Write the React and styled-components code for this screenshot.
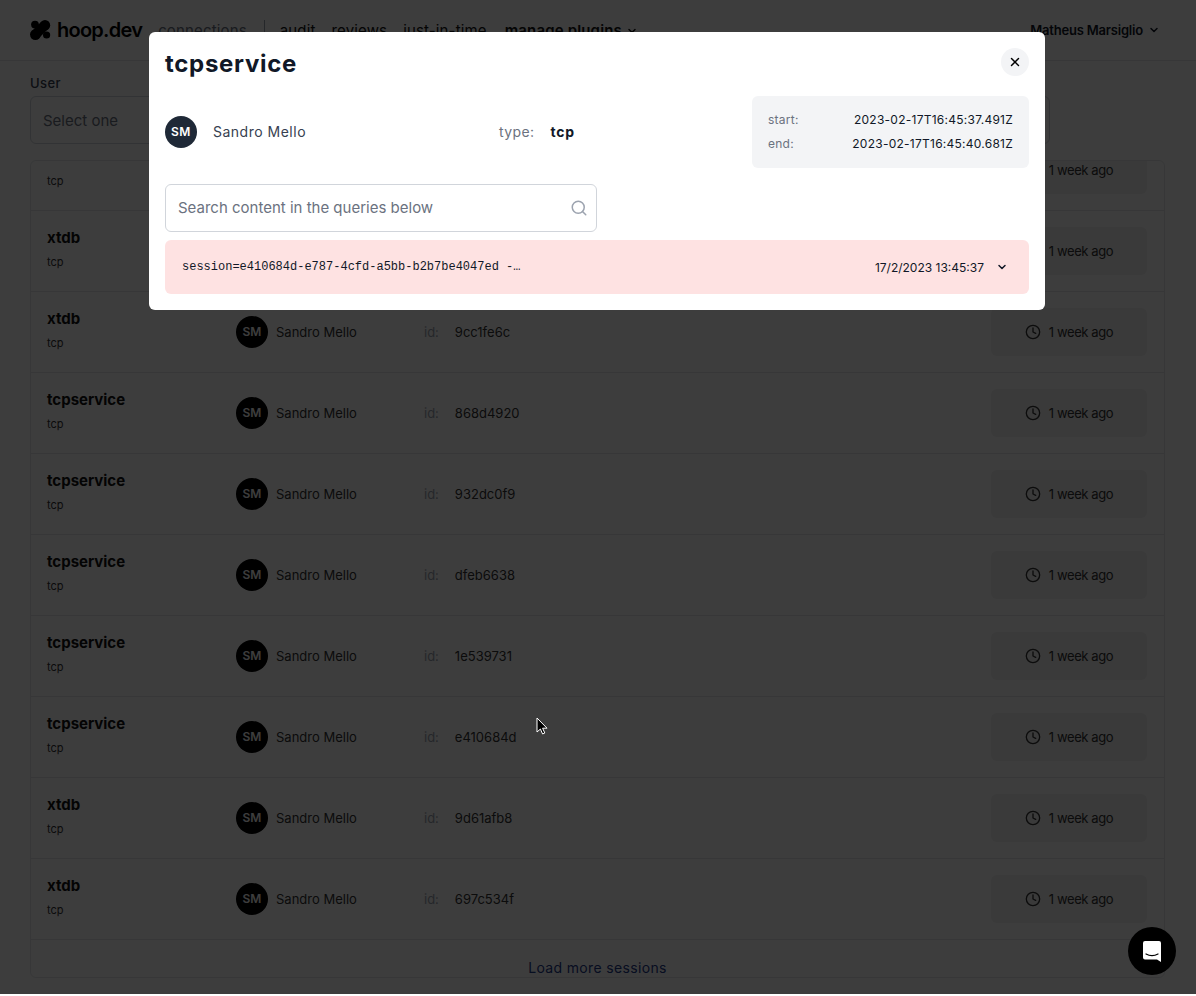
import React from 'react'
import styled, { createGlobalStyle } from 'styled-components'
import { ChevronDown, Clock, Search, X } from 'lucide-react'

const GlobalStyle = createGlobalStyle`
  html, body {
    margin: 0;
    height: 100%;
    overflow: hidden;
    background: #fff;
    font-family: Inter, "Open Sans", sans-serif;
    color: #111827;
  }
  * { box-sizing: border-box; }
`

const Page = styled.div`
  height: 994px;
  display: flex;
  flex-direction: column;
  background: #fff;
`

const Header = styled.header`
  height: 61px;
  flex: none;
  display: flex;
  align-items: center;
  padding: 0 36px 0 30px;
  border-bottom: 1px solid #e5e7eb;
`

const Logo = styled.div`
  display: flex;
  align-items: center;
  gap: 6px;
  font-size: 20px;
  font-weight: 600;
  letter-spacing: -0.75px;
  color: #000;
  margin-right: 16px;
`

const Nav = styled.nav`
  display: flex;
  align-items: center;
  gap: 16px;
  font-size: 15px;
  letter-spacing: 0.15px;
  flex: 1;
  padding-top: 1px;
`

const NavItem = styled.span`
  color: ${({ muted }) => (muted ? '#6b7280' : '#111')};
  font-weight: ${({ strong }) => (strong ? 600 : 400)};
  margin-left: ${({ strong }) => (strong ? '2px' : '0')};
  display: flex;
  align-items: center;
  gap: 4px;
`

const NavDivider = styled.span`
  width: 1px;
  height: 22px;
  margin: 0 -1px 0 1px;
  background: #9ca3af;
`

const UserMenu = styled.div`
  display: flex;
  align-items: center;
  gap: 5px;
  font-size: 13px;
  font-weight: 600;
  letter-spacing: -0.2px;
`

const Filters = styled.div`
  flex: none;
  padding: 15px 30px 0;
  height: 99px;
`

const FilterLabel = styled.div`
  font-size: 13px;
  font-weight: 500;
  letter-spacing: 0.4px;
  color: #374151;
  margin-bottom: 5px;
  line-height: 15px;
`

const SelectBox = styled.div`
  width: 1020px;
  height: 48px;
  border: 1px solid #d1d5db;
  border-radius: 6px;
  display: flex;
  align-items: center;
  padding: 0 12px;
  font-size: 15px;
  color: #6b7280;
`

const ListBox = styled.div`
  flex: none;
  margin: 0 31px 0 30px;
  height: 818px;
  border: 1px solid #e5e7eb;
  border-radius: 6px;
  overflow: hidden;
`

const ScrollList = styled.div`
  margin-top: -31px;
`

const Row = styled.div`
  height: 81px;
  display: flex;
  align-items: center;
  padding: 0 16px 1px;
  border-bottom: 1px solid #e5e7eb;
`

const ConnectionCell = styled.div`
  width: 189px;
  flex: none;
  display: flex;
  flex-direction: column;
  gap: 9px;
  padding-bottom: 4px;
`

const ConnectionName = styled.div`
  font-size: 15px;
  font-weight: 700;
  line-height: 17px;
  min-height: 17px;
  color: #111;
`

const ConnectionType = styled.div`
  font-size: 11px;
  line-height: 14px;
  color: #333;
`

const UserCell = styled.div`
  width: 188px;
  flex: none;
  display: flex;
  align-items: center;
  gap: 8px;
  font-size: 13px;
  color: #333;
`

const Avatar = styled.div`
  width: ${({ size }) => size}px;
  height: ${({ size }) => size}px;
  flex: none;
  border-radius: 50%;
  background: ${({ dark }) => (dark ? '#1f2937' : '#000')};
  color: #fff;
  font-size: 12px;
  font-weight: 600;
  display: flex;
  align-items: center;
  justify-content: center;
`

const IdCell = styled.div`
  flex: 1;
  display: flex;
  gap: 16px;
  font-size: 13px;
  color: #333;
`

const IdLabel = styled.span`
  color: #9ca3af;
`

const TimePill = styled.div`
  width: 156px;
  height: 48px;
  margin-right: 1px;
  background: #f0f0f0;
  border-radius: 6px;
  display: flex;
  align-items: center;
  justify-content: center;
  gap: 8px;
  font-size: 13px;
  letter-spacing: -0.4px;
  color: #333;
`

const LoadMore = styled.div`
  text-align: center;
  font-size: 14px;
  letter-spacing: 0.35px;
  line-height: 17px;
  padding-top: 19px;
  color: #1e3a8a;
`

const Overlay = styled.div`
  position: fixed;
  inset: 0;
  bottom: 2px;
  background: rgba(0, 0, 0, 0.76);
`

const Modal = styled.section`
  position: fixed;
  left: 149px;
  top: 32px;
  width: 896px;
  height: 278px;
  background: #fff;
  border-radius: 6px;
  padding: 16px;
  display: flex;
  flex-direction: column;
`

const ModalHead = styled.div`
  display: flex;
  justify-content: space-between;
  align-items: flex-start;
  height: 48px;
`

const ModalTitle = styled.h1`
  margin: 0;
  font-size: 24px;
  letter-spacing: 0.7px;
  line-height: 31px;
  font-weight: 700;
  color: #111827;
`

const CloseButton = styled.button`
  width: 28px;
  height: 28px;
  border: 0;
  padding: 0;
  border-radius: 50%;
  background: #f3f4f6;
  color: #000;
  display: flex;
  align-items: center;
  justify-content: center;
`

const InfoRow = styled.div`
  display: flex;
  align-items: center;
  height: 72px;
`

const ModalUser = styled.div`
  width: 334px;
  flex: none;
  display: flex;
  align-items: center;
  gap: 16px;
  font-size: 14px;
  letter-spacing: 0.5px;
  line-height: 16px;
  color: #374151;
`

const TypeBlock = styled.div`
  flex: 1;
  display: flex;
  gap: 16px;
  padding-bottom: 2px;
  font-size: 14px;
  letter-spacing: 0.4px;
  color: #6b7280;
`

const TypeValue = styled.strong`
  color: #111827;
  font-weight: 700;
  letter-spacing: 0.7px;
`

const TimesCard = styled.div`
  width: 277px;
  height: 72px;
  background: #f3f4f6;
  border-radius: 6px;
  padding: 0 16px;
  display: flex;
  flex-direction: column;
  justify-content: center;
  gap: 8px;
`

const TimeLine = styled.div`
  display: flex;
  justify-content: space-between;
  font-size: 12px;
  letter-spacing: 0.25px;
  line-height: 16px;
  color: #111827;
`

const TimeKey = styled.span`
  color: #6b7280;
`

const SearchBox = styled.div`
  width: 432px;
  height: 48px;
  margin-top: 16px;
  border: 1px solid #d1d5db;
  border-radius: 6px;
  display: flex;
  align-items: center;
  justify-content: space-between;
  padding: 0 8px 1px 12px;
  font-size: 15px;
  color: #6b7280;
`

const QueryRow = styled.div`
  height: 54px;
  margin-top: 8px;
  background: #fee2e2;
  border-radius: 6px;
  display: flex;
  align-items: center;
  padding: 0 21px 0 17px;
`

const QueryText = styled.code`
  flex: 1;
  font-family: "Liberation Mono", monospace;
  font-size: 12px;
  color: #111827;
`

const QueryTime = styled.span`
  font-size: 12px;
  color: #111827;
  margin-right: 12px;
`

const Cursor = styled.svg`
  position: fixed;
  left: 536px;
  top: 717px;
`

const ChatBubble = styled.div`
  position: fixed;
  left: 1128px;
  top: 927px;
  width: 48px;
  height: 48px;
  border-radius: 50%;
  background: #000;
  display: flex;
  align-items: center;
  justify-content: center;
`

// the first row is scrolled under the top of the list, so its name doesn't show
const rows = [
  ['', 'a17fe2b0'],
  ['xtdb', '5be02c41'],
  ['xtdb', '9cc1fe6c'],
  ['tcpservice', '868d4920'],
  ['tcpservice', '932dc0f9'],
  ['tcpservice', 'dfeb6638'],
  ['tcpservice', '1e539731'],
  ['tcpservice', 'e410684d'],
  ['xtdb', '9d61afb8'],
  ['xtdb', '697c534f'],
]

const HoopLogo = () => (
  <svg width="21" height="20" viewBox="0 0 21 20" fill="#000">
    <circle cx="5" cy="4.6" r="3.9" />
    <circle cx="15" cy="5.2" r="5.2" />
    <circle cx="5.4" cy="14.6" r="5.4" />
    <circle cx="16.6" cy="15" r="3.6" />
    <path d="M11 2 18 9 9 18 2 11z" />
  </svg>
)

const App = () => (
  <>
    <GlobalStyle />
    <Page>
      <Header>
        <Logo>
          <HoopLogo />
          hoop.dev
        </Logo>
        <Nav>
          <NavItem muted>connections</NavItem>
          <NavDivider />
          <NavItem>audit</NavItem>
          <NavItem>reviews</NavItem>
          <NavItem>just-in-time</NavItem>
          <NavItem strong>
            manage plugins
            <ChevronDown size={12} strokeWidth={3} />
          </NavItem>
        </Nav>
        <UserMenu>
          Matheus Marsiglio
          <ChevronDown size={12} strokeWidth={3} />
        </UserMenu>
      </Header>
      <Filters>
        <FilterLabel>User</FilterLabel>
        <SelectBox>Select one</SelectBox>
      </Filters>
      <ListBox>
        <ScrollList>
          {rows.map(([name, id]) => (
            <Row key={id}>
              <ConnectionCell>
                <ConnectionName>{name}</ConnectionName>
                <ConnectionType>tcp</ConnectionType>
              </ConnectionCell>
              <UserCell>
                <Avatar size={32}>SM</Avatar>
                Sandro Mello
              </UserCell>
              <IdCell>
                <IdLabel>id:</IdLabel>
                {id}
              </IdCell>
              <TimePill>
                <Clock size={16} />
                1 week ago
              </TimePill>
            </Row>
          ))}
        </ScrollList>
        <LoadMore>Load more sessions</LoadMore>
      </ListBox>
    </Page>
    <Overlay />
    <Modal>
      <ModalHead>
        <ModalTitle>tcpservice</ModalTitle>
        <CloseButton aria-label="close">
          <X size={14} strokeWidth={2.5} />
        </CloseButton>
      </ModalHead>
      <InfoRow>
        <ModalUser>
          <Avatar size={32} dark>SM</Avatar>
          Sandro Mello
        </ModalUser>
        <TypeBlock>
          type:
          <TypeValue>tcp</TypeValue>
        </TypeBlock>
        <TimesCard>
          <TimeLine>
            <TimeKey>start:</TimeKey>
            2023-02-17T16:45:37.491Z
          </TimeLine>
          <TimeLine>
            <TimeKey>end:</TimeKey>
            2023-02-17T16:45:40.681Z
          </TimeLine>
        </TimesCard>
      </InfoRow>
      <SearchBox>
        Search content in the queries below
        <Search size={18} color="#9ca3af" />
      </SearchBox>
      <QueryRow>
        <QueryText>session=e410684d-e787-4cfd-a5bb-b2b7be4047ed -…</QueryText>
        <QueryTime>17/2/2023 13:45:37</QueryTime>
        <ChevronDown size={12} strokeWidth={3} />
      </QueryRow>
    </Modal>
    <Cursor width="12" height="18" viewBox="0 0 12 18">
      <path d="M1 1v14l3.4-3 2.2 5 2.2-1-2.2-4.8H11z" fill="#000" stroke="#fff" strokeWidth="1" />
    </Cursor>
    <ChatBubble>
      <svg width="20" height="24" viewBox="0 0 20 24">
        <path d="M3 2h14a2 2 0 0 1 2 2v19l-4-2.500H3a2 2 0 0 1-2-2V4a2 2 0 0 1 2-2z" fill="#fff" />
        <path d="M4 15c3.500 2 8.500 2 12 0" fill="none" stroke="#000" strokeWidth="1.2" strokeLinecap="round" />
      </svg>
    </ChatBubble>
  </>
)

export default App
